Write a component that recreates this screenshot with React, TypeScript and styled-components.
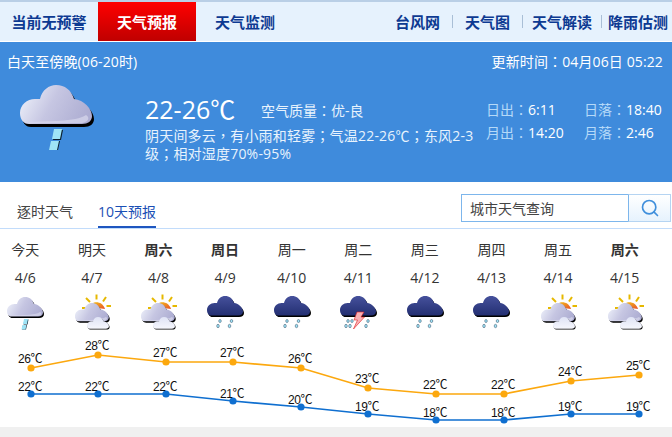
import { Search } from "lucide-react";
import styled, { createGlobalStyle } from "styled-components";

const GlobalStyle = createGlobalStyle`
    html, body {
        margin: 0;
        padding: 0;
        background-color: #ffffff;
    }
    body {
        font-family: "Open Sans", "Noto Sans CJK TC", "Liberation Sans", sans-serif;
        overflow: hidden;
    }
`

const Page = styled.div`
    width: 672px;
    height: 437px;
    overflow: hidden;
    display: flex;
    flex-direction: column;
`

const Nav = styled.nav`
    height: 39px;
    margin-top: 2px;
    flex-shrink: 0;
    display: flex;
    justify-content: space-between;
    background-color: #e6f2fd;
    box-shadow: 0 -2px 0 #b9cfe6;
    font-size: 15px;
    font-weight: 700;
    color: #0d3a92;
`

const NavGroup = styled.div`
    display: flex;
    align-items: center;
`

const NavTab = styled.div<{ $active?: boolean }>`
    width: 98px;
    height: 100%;
    display: flex;
    align-items: center;
    justify-content: center;
    color: ${props => props.$active ? "#ffffff" : "#0d3a92"};
    background: ${props => props.$active ? "linear-gradient(#ff0000, #bf0000)" : "transparent"};
`

const NavLinks = styled.div`
    display: flex;
    align-items: center;
    margin-right: 4px;
`

const NavLink = styled.span<{ $gap: number }>`
    padding-left: ${props => props.$gap}px;
    white-space: nowrap;
`

const NavSep = styled.span<{ $gap: number }>`
    width: 1px;
    height: 13px;
    margin-left: ${props => props.$gap}px;
    background-color: #a9bfd6;
`

const Panel = styled.section`
    height: 140px;
    margin-top: 1px;
    flex-shrink: 0;
    background-color: #3f8bdc;
    color: #ffffff;
    font-size: 14px;
`

const PanelHead = styled.div`
    height: 37px;
    padding: 0 9px 0 7px;
    display: flex;
    align-items: center;
    justify-content: space-between;
    letter-spacing: 0.12px;
`

const PanelBody = styled.div`
    display: flex;
    align-items: flex-start;
`

const BigIcon = styled.svg`
    width: 80px;
    height: 72px;
    margin-left: 16px;
    flex-shrink: 0;
`

const Main = styled.div`
    width: 332px;
    margin: 10px 0 0 49px;
`

const TempRow = styled.div`
    display: flex;
    align-items: center;
    height: 38px;
`

const Temp = styled.span`
    font-size: 25px;
    width: 116px;
    white-space: nowrap;
`

const Air = styled.span`
    margin-top: 4px;
    color: #e8f3fd;
`

const Desc = styled.div`
    line-height: 18px;
    letter-spacing: 0.2px;
    color: #e8f3fd;
`

const SunGrid = styled.div`
    display: grid;
    grid-template-columns: 98px 88px;
    grid-auto-rows: 23px;
    margin: 20px 0 0 10px;
    white-space: nowrap;
`

const SunLabel = styled.span`
    color: #b5d9f8;
`

const SubBar = styled.div`
    height: 46px;
    flex-shrink: 0;
    display: flex;
    justify-content: space-between;
    border-bottom: 1px solid #c2dcfb;
`

const SubTabs = styled.div`
    display: flex;
    gap: 25px;
    padding-left: 17px;
    font-size: 14px;
`

const SubTab = styled.div<{ $active?: boolean }>`
    height: 100%;
    display: flex;
    align-items: center;
    padding-top: 14px;
    box-sizing: border-box;
    color: ${props => props.$active ? "#1a4fb5" : "#444444"};
    border-bottom: 2px solid ${props => props.$active ? "#1e56c0" : "transparent"};
    margin-bottom: -1px;
`

const SearchBox = styled.div`
    display: flex;
    margin: 12px 1px 0 0;
    height: 28px;
`

const SearchInput = styled.div`
    width: 158px;
    height: 26px;
    border: 1px solid #7db6ec;
    border-right: 0;
    line-height: 27px;
    padding-left: 8px;
    font-size: 14px;
    color: #444444;
`

const SearchButton = styled.div`
    width: 41px;
    height: 26px;
    border: 1px solid #b5d4f2;
    border-left-color: #7db6ec;
    display: flex;
    align-items: center;
    justify-content: center;
    background: linear-gradient(#ffffff, #e6f2fd);
    color: #3f8fdc;
`

const Days = styled.div`
    display: flex;
    margin-left: -8px;
    flex-shrink: 0;
`

const Day = styled.div`
    width: 66.6px;
    display: flex;
    flex-direction: column;
    align-items: center;
    color: #333333;
    font-size: 14px;
`

const DayName = styled.div<{ $weekend?: boolean }>`
    height: 20px;
    line-height: 20px;
    margin-top: 11px;
    font-weight: ${props => props.$weekend ? 700 : 400};
`

const DayDate = styled.div`
    height: 20px;
    line-height: 20px;
    margin-top: 8px;
`

const SmallIcon = styled.svg`
    width: 40px;
    height: 36px;
    margin-top: 6px;
`

const Chart = styled.svg`
    display: block;
    width: 672px;
    height: 97px;
    flex-shrink: 0;
`

const ChartLabel = styled.text`
    font-family: "Liberation Sans", "Noto Sans CJK SC", sans-serif;
    font-size: 12px;
    letter-spacing: -0.4px;
    fill: #111111;
    text-anchor: middle;
`

const Footer = styled.div`
    flex: 1;
    background-color: #f0f0f0;
`

const CLOUD = "M13 45C7 45 4 40 4 34C4 26 11 20 19 20L24 20C26 11 33 6 40 6C49 6 55 11 58 20C68 21 76 30 76 37C76 42 72 45 66 45Z"

type Kind = "rain" | "sun" | "dark" | "storm"

function IconDefs() {
    return (
        <defs>
            <linearGradient id="lightCloud" x1="0" y1="0.3" x2="1" y2="0.6">
                <stop offset="0" stopColor="#eceff9" />
                <stop offset="0.45" stopColor="#c6c6e2" />
                <stop offset="1" stopColor="#adadd2" />
            </linearGradient>
            <linearGradient id="darkCloud" x1="0" y1="0" x2="0" y2="1">
                <stop offset="0" stopColor="#46519c" />
                <stop offset="1" stopColor="#232f72" />
            </linearGradient>
            <linearGradient id="whiteCloud" x1="0" y1="0" x2="0" y2="1">
                <stop offset="0" stopColor="#dfe3f5" />
                <stop offset="1" stopColor="#f6f7fd" />
            </linearGradient>
            <linearGradient id="sunArc" x1="0" y1="0" x2="1" y2="1">
                <stop offset="0" stopColor="#f5c518" />
                <stop offset="1" stopColor="#e8502a" />
            </linearGradient>
        </defs>
    )
}

function LightCloud() {
    return (
        <g>
            <path d={CLOUD} fill="#000000" transform="translate(2 3)" />
            <path d={CLOUD} fill="url(#lightCloud)" />
            <path d="M12 43C30 42 60 43 70 36C74 38 73 43 66 44L14 44Z" fill="#d8d8ec" opacity="0.7" />
        </g>
    )
}

function DarkCloud() {
    return (
        <g transform="translate(0 -2)">
            <path d={CLOUD} fill="#000000" transform="translate(2 3)" />
            <path d={CLOUD} fill="url(#darkCloud)" />
        </g>
    )
}

function RainBits() {
    return (
        <g>
            <path d="M38 50L46 50L44 60L36 60Z" fill="#0b2030" transform="translate(1 1)" />
            <path d="M35 62L43 62L41 71L33 71Z" fill="#0b2030" transform="translate(1 0)" />
            <path d="M38 50L46 50L44 60L36 60Z" fill="#9fe4f6" />
            <path d="M35 62L43 62L41 71L33 71Z" fill="#9fe4f6" />
        </g>
    )
}

function Drops({ at }: { at: number[] }) {
    return (
        <g>
            {at.map(x => (
                <g key={x}>
                    <ellipse cx={x + 4} cy={54} rx="2.6" ry="3" fill="#9fe4f6" stroke="#10203f" strokeWidth="0.8" />
                    <ellipse cx={x} cy={64} rx="2.6" ry="3.4" fill="#9fe4f6" stroke="#10203f" strokeWidth="0.8" />
                </g>
            ))}
        </g>
    )
}

function WeatherArt({ kind }: { kind: Kind }) {
    if (kind === "rain") {
        return (
            <>
                <LightCloud />
                <RainBits />
            </>
        )
    }
    if (kind === "sun") {
        return (
            <>
                <g stroke="#e6b800" strokeWidth="4">
                    <path d="M28 8L36 16" />
                    <path d="M49 1L49 11" />
                    <path d="M68 6L62 15" />
                    <path d="M78 24L69 24" />
                    <path d="M20 28L30 28" />
                </g>
                <path d="M36 26C38 14 60 12 66 30Z" fill="url(#sunArc)" />
                <g transform="translate(2.2 12.4) scale(0.94)">
                    <LightCloud />
                </g>
                <g transform="translate(27.6 42.4) scale(0.61 0.6)">
                    <path d={CLOUD} fill="#000000" transform="translate(2 3)" />
                    <path d={CLOUD} fill="url(#whiteCloud)" />
                </g>
            </>
        )
    }
    if (kind === "storm") {
        return (
            <>
                <DarkCloud />
                <Drops at={[16, 56]} />
                <Drops at={[24]} />
                <path d="M38 36L52 36L46 46L53 46L31 70L39 52L32 52Z" fill="#f9b0b4" stroke="#e02020" strokeWidth="1.2" />
            </>
        )
    }
    return (
        <>
            <DarkCloud />
            <Drops at={[26, 49]} />
        </>
    )
}

const days: { name: string; date: string; kind: Kind; weekend?: boolean }[] = [
    { name: "今天", date: "4/6", kind: "rain" },
    { name: "明天", date: "4/7", kind: "sun" },
    { name: "周六", date: "4/8", kind: "sun", weekend: true },
    { name: "周日", date: "4/9", kind: "dark", weekend: true },
    { name: "周一", date: "4/10", kind: "dark" },
    { name: "周二", date: "4/11", kind: "storm" },
    { name: "周三", date: "4/12", kind: "dark" },
    { name: "周四", date: "4/13", kind: "dark" },
    { name: "周五", date: "4/14", kind: "sun" },
    { name: "周六", date: "4/15", kind: "sun", weekend: true },
]

const xs = [31, 98, 166, 233, 301, 368, 436, 504, 571, 639]
const high = [
    { t: 26, y: 38 }, { t: 28, y: 25 }, { t: 27, y: 32 }, { t: 27, y: 32 }, { t: 26, y: 38 },
    { t: 23, y: 58 }, { t: 22, y: 64 }, { t: 22, y: 64 }, { t: 24, y: 51 }, { t: 25, y: 45 },
]
const low = [
    { t: 22, y: 64 }, { t: 22, y: 64 }, { t: 22, y: 64 }, { t: 21, y: 71 }, { t: 20, y: 77 },
    { t: 19, y: 84 }, { t: 18, y: 90 }, { t: 18, y: 90 }, { t: 19, y: 84 }, { t: 19, y: 84 },
]

function Series({ data, color, lift }: { data: { t: number; y: number }[]; color: string; lift: number }) {
    return (
        <g>
            <polyline
                points={data.map((d, i) => `${xs[i]},${d.y}`).join(" ")}
                fill="none"
                stroke={color}
                strokeWidth="1.7"
            />
            {data.map((d, i) => (
                <g key={i}>
                    <circle cx={xs[i]} cy={d.y} r="3.6" fill={color} />
                    <ChartLabel x={xs[i] - 1} y={d.y - lift}>{d.t}℃</ChartLabel>
                </g>
            ))}
        </g>
    )
}

export default function App() {
    return (
        <Page>
            <GlobalStyle />
            <Nav>
                <NavGroup>
                    <NavTab>当前无预警</NavTab>
                    <NavTab $active>天气预报</NavTab>
                    <NavTab>天气监测</NavTab>
                </NavGroup>
                <NavLinks>
                    <NavLink $gap={0}>台风网</NavLink>
                    <NavSep $gap={12} />
                    <NavLink $gap={12}>天气图</NavLink>
                    <NavSep $gap={12} />
                    <NavLink $gap={9}>天气解读</NavLink>
                    <NavSep $gap={9} />
                    <NavLink $gap={6}>降雨估测</NavLink>
                </NavLinks>
            </Nav>
            <Panel>
                <PanelHead>
                    <span>白天至傍晚(06-20时)</span>
                    <span>更新时间：04月06日 05:22</span>
                </PanelHead>
                <PanelBody>
                    <BigIcon viewBox="0 0 80 72">
                        <IconDefs />
                        <WeatherArt kind="rain" />
                    </BigIcon>
                    <Main>
                        <TempRow>
                            <Temp>22-26℃</Temp>
                            <Air>空气质量：优-良</Air>
                        </TempRow>
                        <Desc>阴天间多云，有小雨和轻雾；气温22-26℃；东风2-3级；相对湿度70%-95%</Desc>
                    </Main>
                    <SunGrid>
                        <span><SunLabel>日出：</SunLabel>6:11</span>
                        <span><SunLabel>日落：</SunLabel>18:40</span>
                        <span><SunLabel>月出：</SunLabel>14:20</span>
                        <span><SunLabel>月落：</SunLabel>2:46</span>
                    </SunGrid>
                </PanelBody>
            </Panel>
            <SubBar>
                <SubTabs>
                    <SubTab>逐时天气</SubTab>
                    <SubTab $active>10天预报</SubTab>
                </SubTabs>
                <SearchBox>
                    <SearchInput>城市天气查询</SearchInput>
                    <SearchButton>
                        <Search size={20} strokeWidth={2} />
                    </SearchButton>
                </SearchBox>
            </SubBar>
            <Days>
                {days.map(d => (
                    <Day key={d.date}>
                        <DayName $weekend={d.weekend}>{d.name}</DayName>
                        <DayDate>{d.date}</DayDate>
                        <SmallIcon viewBox="0 0 80 72">
                            <WeatherArt kind={d.kind} />
                        </SmallIcon>
                    </Day>
                ))}
            </Days>
            <Chart viewBox="0 0 672 97">
                <Series data={high} color="#fca80e" lift={5} />
                <Series data={low} color="#0f6fd0" lift={3} />
            </Chart>
            <Footer />
        </Page>
    )
}
